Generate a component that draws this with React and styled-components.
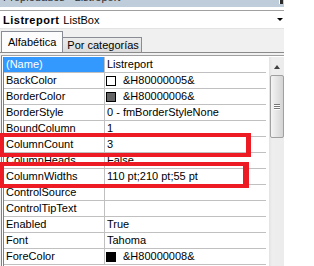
import React from 'react';
import styled, {createGlobalStyle} from 'styled-components';

const GlobalStyle = createGlobalStyle`
    body{
        margin: 0;
        background: #ffffff;
        font-family: "Liberation Sans", Arial, sans-serif;
        font-size: 11px;
    }
`;

const Window = styled.div`
    position: relative;
    display: flex;
    flex-direction: column;
    width: 284px;
    height: 266px;
    overflow: hidden;
    background: #f0f0f0;
`;

const TitleBar = styled.div`
    flex-shrink: 0;
    display: flex;
    justify-content: space-between;
    height: 7px;
    overflow: hidden;
    background: #bfcddb;
    border-bottom: 3px solid #ffffff;

    span{
        margin: -10px 0 0 3px;
        line-height: 14px;
        color: #2e2e2e;
        white-space: nowrap;
    }

    .close{
        width: 3px;
        height: 4px;
        margin-right: 1px;
        background: #2b2b2b;
        border-left: 1px solid #ffffff;
    }
`;

const ComboBox = styled.div`
    flex-shrink: 0;
    display: flex;
    align-items: center;
    height: 17px;
    padding-left: 3px;
    background: #ffffff;
    border-top: 1px solid #a0a0a0;
    border-bottom: 1px solid #e3e3e3;
    color: #000000;

    b{
        letter-spacing: 0.5px;
        margin-right: 4px;
    }

    .arrow{
        margin-left: auto;
        margin-right: 1px;
        border-left: 3px solid transparent;
        border-right: 3px solid transparent;
        border-top: 3px solid #000000;
    }
`;

const TabStrip = styled.div`
    flex-shrink: 0;
    display: flex;
    align-items: flex-end;
    height: 23px;
    padding-left: 1px;
`;

const Tab = styled.div`
    display: flex;
    align-items: center;
    box-sizing: border-box;
    height: ${p => p.$active ? 21 : 15}px;
    padding: ${p => p.$active ? '0 6px' : '0 2px 0 4px'};
    background: ${p => p.$active ? '#fcfcfc' : 'linear-gradient(#ececec, #dcdcdc)'};
    border: 1px solid #898c95;
    border-bottom: none;
    border-left-width: ${p => p.$active ? 1 : 0}px;
    color: #000000;
    white-space: nowrap;
`;

const Panel = styled.div`
    flex: 1;
    min-height: 0;
    display: flex;
    flex-direction: column;
    border-top: 1px solid #8a8a8a;
    padding-top: 2px;
`;

const GridFrame = styled.div`
    flex: 1;
    min-height: 0;
    display: flex;
    border-top: 1px solid #a0a0a0;
    padding-top: 1px;
    background: #ffffff;
    margin-left: 1px;
    box-shadow: inset 1px 0 0 #808080;
`;

const Grid = styled.div`
    display: flex;
    flex-direction: column;
    width: 264px;
    margin-left: 2px;
    border-left: 1px solid #808080;
`;

const Row = styled.div`
    flex-shrink: 0;
    display: flex;
    height: 15px;
    border-bottom: 1px solid #c0c0c0;
    line-height: 15px;
    color: #000000;
`;

const NameCell = styled.div`
    width: 98px;
    padding-left: 2px;
    border-right: 1px solid #c0c0c0;
    background: ${p => p.$selected ? '#3399ff' : '#ffffff'};
    color: ${p => p.$selected ? '#ffffff' : '#000000'};
    white-space: nowrap;
    overflow: hidden;
`;

const ValueCell = styled.div`
    flex: 1;
    display: flex;
    align-items: center;
    padding-left: 2px;
    white-space: nowrap;
    overflow: hidden;
`;

const Swatch = styled.span`
    width: 8px;
    height: 8px;
    margin: 0 7px 0 -1px;
    border: 1px solid #000000;
    background: ${p => p.$color};
`;

const ScrollBar = styled.div`
    display: flex;
    flex-direction: column;
    align-items: center;
    width: 15px;
    margin-left: 3px;
    background: linear-gradient(90deg, #e2e2e2, #eeeeee 3px, #ececec);

    .up{
        margin: 8px 0 6px;
        border-left: 3px solid transparent;
        border-right: 3px solid transparent;
        border-bottom: 4px solid #404040;
    }
`;

const Thumb = styled.div`
    display: flex;
    flex-direction: column;
    justify-content: center;
    align-items: center;
    gap: 1px;
    box-sizing: border-box;
    width: 14px;
    height: 63px;
    border: 1px solid #a0a0a0;
    border-radius: 2px;
    background: linear-gradient(90deg, #f4f4f4, #e4e4e4 50%, #d4d4d4);

    i{
        width: 6px;
        height: 1px;
        background: #777777;
        box-shadow: 0 1px 0 #ffffff;
    }
`;

const Highlight = styled.div`
    position: absolute;
    left: 0;
    top: ${p => p.$top}px;
    width: ${p => p.$width}px;
    height: ${p => p.$height}px;
    box-sizing: border-box;
    border: 4px solid #ed1c24;
    border-right-width: ${p => p.$right}px;
`;

const properties = [
    {name: '(Name)', value: 'Listreport', selected: true},
    {name: 'BackColor', value: '&H80000005&', swatch: '#ffffff'},
    {name: 'BorderColor', value: '&H80000006&', swatch: '#646464'},
    {name: 'BorderStyle', value: '0 - fmBorderStyleNone'},
    {name: 'BoundColumn', value: '1'},
    {name: 'ColumnCount', value: '3'},
    {name: 'ColumnHeads', value: 'False'},
    {name: 'ColumnWidths', value: '110 pt;210 pt;55 pt'},
    {name: 'ControlSource', value: ''},
    {name: 'ControlTipText', value: ''},
    {name: 'Enabled', value: 'True'},
    {name: 'Font', value: 'Tahoma'},
    {name: 'ForeColor', value: '&H80000008&', swatch: '#000000'},
];

export default function App(){
    return(
        <>
            <GlobalStyle/>
            <Window>
                <TitleBar>
                    <span>Propiedades - Listreport</span>
                    <div className="close"/>
                </TitleBar>
                <ComboBox>
                    <b>Listreport</b>
                    <span>ListBox</span>
                    <div className="arrow"/>
                </ComboBox>
                <TabStrip>
                    <Tab $active>Alfabética</Tab>
                    <Tab>Por categorías</Tab>
                </TabStrip>
                <Panel>
                    <GridFrame>
                        <Grid>
                            {properties.map(p=>(
                                <Row key={p.name}>
                                    <NameCell $selected={p.selected}>{p.name}</NameCell>
                                    <ValueCell>
                                        {p.swatch && <Swatch $color={p.swatch}/>}
                                        {p.value}
                                    </ValueCell>
                                </Row>
                            ))}
                        </Grid>
                        <ScrollBar>
                            <div className="up"/>
                            <Thumb><i/><i/><i/></Thumb>
                        </ScrollBar>
                    </GridFrame>
                </Panel>
                <Highlight $top={133} $width={251} $height={24} $right={5}/>
                <Highlight $top={162} $width={249} $height={26} $right={6}/>
            </Window>
        </>
    );
}
